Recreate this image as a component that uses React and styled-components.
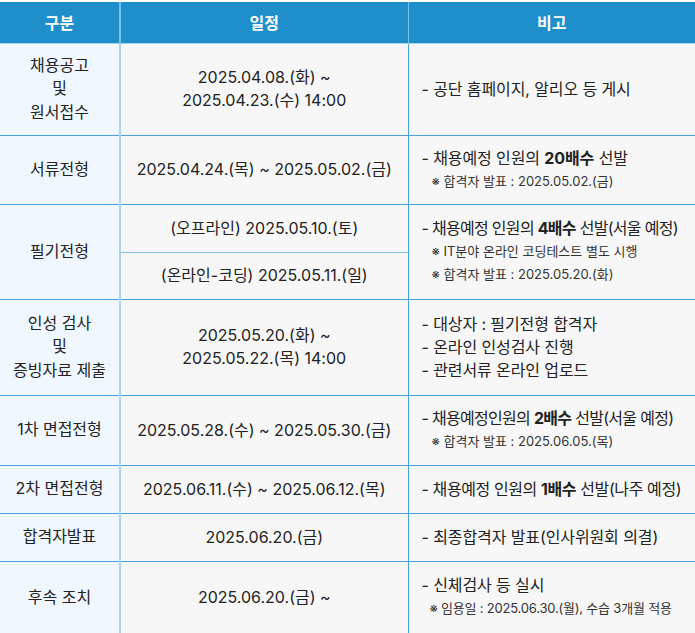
import React from 'react';
import styled, { createGlobalStyle } from 'styled-components';

const GlobalStyle = createGlobalStyle`
  html, body {
    margin: 0;
    padding: 0;
    background: #ffffff;
  }
  body {
    font-family: Inter, "Noto Sans CJK KR", "Noto Sans", sans-serif;
    color: #222222;
  }
`;

const Wrap = styled.div`
  width: 695px;
  padding-top: 2px;
  overflow: hidden;
`;

const Table = styled.table`
  width: 695px;
  border-collapse: collapse;
  table-layout: fixed;
`;

const HeadRow = styled.tr`
  height: 41px;
`;

const HeadCell = styled.th`
  background: #1e8fcb;
  color: #ffffff;
  font-size: 16px;
  font-weight: 700;
  text-align: center;
  padding: 0;
  border-left: ${(p) => (p.first ? 'none' : `${p.divider || 1}px solid #7cbfe6`)};
  border-bottom: 1px solid #a9d3ee;
`;

const Row = styled.tr`
  height: ${(p) => p.h}px;
`;

const LabelCell = styled.td`
  background: #f0f7fe;
  font-size: 16px;
  line-height: 23.5px;
  text-align: center;
  vertical-align: middle;
  padding: 0 4px;
  border-top: 1px solid #4a9fd8;
  border-right: 2px solid #a9d3ee;
  white-space: nowrap;
`;

const DateCell = styled.td`
  background: #f7f7f7;
  font-size: 16px;
  line-height: 23px;
  text-align: center;
  vertical-align: middle;
  padding: 0;
  border-top: 1px solid ${(p) => (p.sub ? '#84c0e6' : '#4a9fd8')};
  border-right: 1px solid #4a9fd8;
  white-space: nowrap;
`;

const NoteCell = styled.td`
  background: #f7f7f7;
  font-size: 16px;
  line-height: 23px;
  text-align: left;
  vertical-align: middle;
  padding: 0 0 0 13px;
  border-top: 1px solid #4a9fd8;
`;

const Line = styled.div`
  white-space: nowrap;
  letter-spacing: ${(p) => (p.tight ? `-${p.tight}px` : '-0.1px')};
`;

const Small = styled.div`
  font-size: 13px;
  line-height: 23px;
  padding-left: ${(p) => (p.indent != null ? p.indent : 10)}px;
  color: #333333;
  white-space: nowrap;
  letter-spacing: ${(p) => (p.tight ? `-${p.tight}px` : '0')};
`;

const Strong = styled.b`
  font-weight: 700;
`;

const Lines = ({ items }) => items.map((t, i) => <div key={i}>{t}</div>);

export default function App() {
  return (
    <Wrap>
      <GlobalStyle />
      <Table>
        <colgroup>
          <col style={{ width: 120 }} />
          <col style={{ width: 288 }} />
          <col />
        </colgroup>
        <thead>
          <HeadRow>
            <HeadCell first>구분</HeadCell>
            <HeadCell divider={2}>일정</HeadCell>
            <HeadCell>비고</HeadCell>
          </HeadRow>
        </thead>
        <tbody>
          <Row h={92}>
            <LabelCell><Lines items={['채용공고', '및', '원서접수']} /></LabelCell>
            <DateCell><Lines items={['2025.04.08.(화) ~', '2025.04.23.(수) 14:00']} /></DateCell>
            <NoteCell><Line>- 공단 홈페이지, 알리오 등 게시</Line></NoteCell>
          </Row>
          <Row h={69}>
            <LabelCell>서류전형</LabelCell>
            <DateCell>2025.04.24.(목) ~ 2025.05.02.(금)</DateCell>
            <NoteCell>
              <Line>- 채용예정 인원의 <Strong>20배수</Strong> 선발</Line>
              <Small>※ 합격자 발표 : 2025.05.02.(금)</Small>
            </NoteCell>
          </Row>
          <Row h={48}>
            <LabelCell rowSpan={2}>필기전형</LabelCell>
            <DateCell>(오프라인) 2025.05.10.(토)</DateCell>
            <NoteCell rowSpan={2}>
              <Line tight={0.7}>- 채용예정 인원의 <Strong>4배수</Strong> 선발(서울 예정)</Line>
              <Small>※ IT분야 온라인 코딩테스트 별도 시행</Small>
              <Small>※ 합격자 발표 : 2025.05.20.(화)</Small>
            </NoteCell>
          </Row>
          <Row h={47}>
            <DateCell sub>(온라인-코딩) 2025.05.11.(일)</DateCell>
          </Row>
          <Row h={96}>
            <LabelCell><Lines items={['인성 검사', '및', '증빙자료 제출']} /></LabelCell>
            <DateCell><Lines items={['2025.05.20.(화) ~', '2025.05.22.(목) 14:00']} /></DateCell>
            <NoteCell>
              <Line>- 대상자 : 필기전형 합격자</Line>
              <Line>- 온라인 인성검사 진행</Line>
              <Line>- 관련서류 온라인 업로드</Line>
            </NoteCell>
          </Row>
          <Row h={70}>
            <LabelCell>1차 면접전형</LabelCell>
            <DateCell>2025.05.28.(수) ~ 2025.05.30.(금)</DateCell>
            <NoteCell>
              <Line tight={0.7}>- 채용예정인원의 <Strong>2배수</Strong> 선발(서울 예정)</Line>
              <Small>※ 합격자 발표 : 2025.06.05.(목)</Small>
            </NoteCell>
          </Row>
          <Row h={48}>
            <LabelCell>2차 면접전형</LabelCell>
            <DateCell>2025.06.11.(수) ~ 2025.06.12.(목)</DateCell>
            <NoteCell><Line tight={0.4}>- 채용예정 인원의 <Strong>1배수</Strong> 선발(나주 예정)</Line></NoteCell>
          </Row>
          <Row h={48}>
            <LabelCell>합격자발표</LabelCell>
            <DateCell>2025.06.20.(금)</DateCell>
            <NoteCell><Line>- 최종합격자 발표(인사위원회 의결)</Line></NoteCell>
          </Row>
          <Row h={72}>
            <LabelCell>후속 조치</LabelCell>
            <DateCell>2025.06.20.(금) ~</DateCell>
            <NoteCell>
              <Line>- 신체검사 등 실시</Line>
              <Small indent={8} tight={0.2}>※ 임용일 : 2025.06.30.(월), 수습 3개월 적용</Small>
            </NoteCell>
          </Row>
        </tbody>
      </Table>
    </Wrap>
  );
}
